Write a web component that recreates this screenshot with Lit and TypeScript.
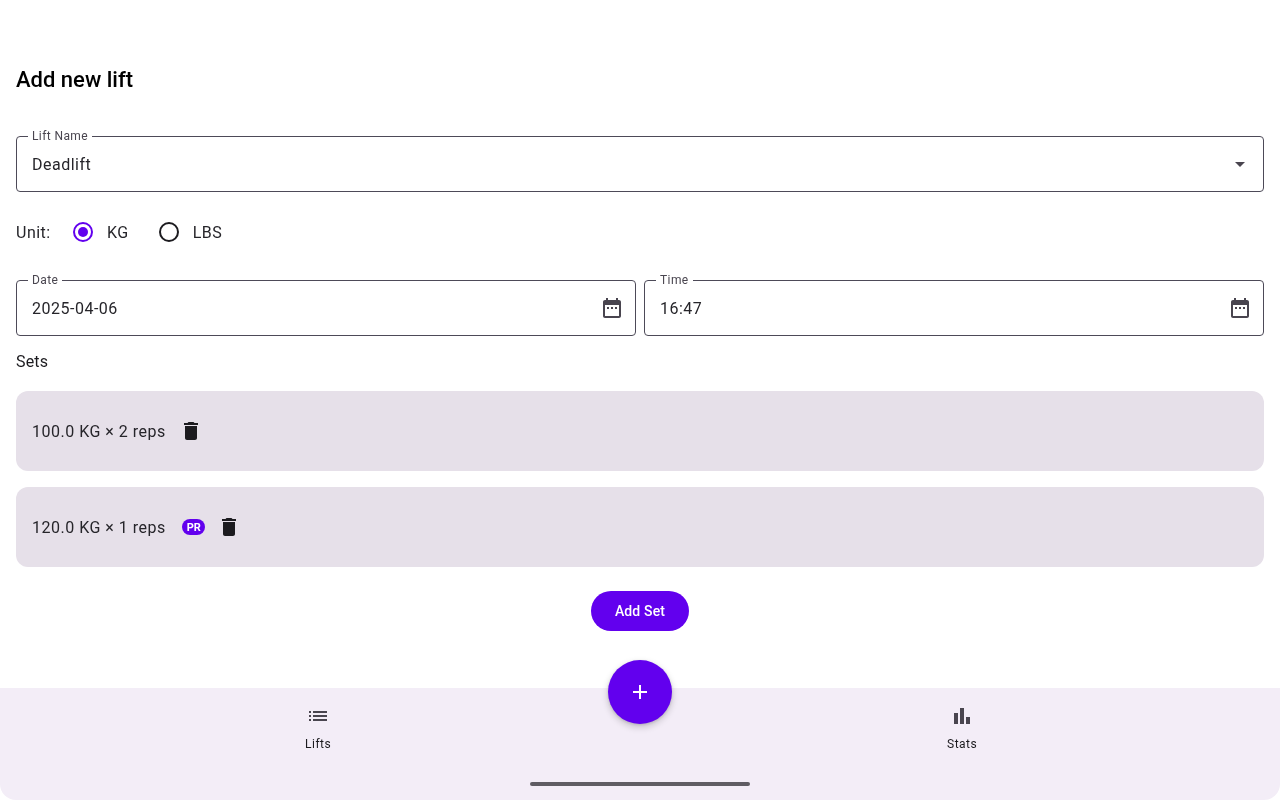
import { LitElement, html, css, svg } from 'lit';
import { customElement } from 'lit/decorators.js';

const icon = (d: unknown, size = 24) =>
  html`<svg width=${size} height=${size} viewBox="0 0 24 24" fill="currentColor">${d}</svg>`;

const trash = svg`<path d="M6 19c0 1.1.9 2 2 2h8c1.1 0 2-.9 2-2V7H6v12zM19 4h-3.5l-1-1h-5l-1 1H5v2h14V4z" />`;
const calendar = svg`<path d="M9 11H7v2h2v-2zm4 0h-2v2h2v-2zm4 0h-2v2h2v-2zm2-7h-1V2h-2v2H8V2H6v2H5c-1.11 0-1.99.9-1.99 2L3 20c0 1.1.89 2 2 2h14c1.1 0 2-.9 2-2V6c0-1.1-.9-2-2-2zm0 16H5V9h14v11z" />`;
const arrow = svg`<path d="M7 10l5 5 5-5z" />`;
const list = svg`<path d="M3 13h2v-2H3v2zm0 4h2v-2H3v2zm0-8h2V7H3v2zm4 4h14v-2H7v2zm0 4h14v-2H7v2zM7 7v2h14V7H7z" />`;
const bars = svg`<path d="M4 9h4v11H4zM16 13h4v7h-4zM10 4h4v16h-4z" />`;
const plus = svg`<path d="M19 13h-6v6h-2v-6H5v-2h6V5h2v6h6v2z" />`;

@customElement('app-root')
export class AppRoot extends LitElement {
  static styles = css`
    :host {
      display: flex;
      flex-direction: column;
      height: 800px;
      overflow: hidden;
      position: relative;
      font-family: Roboto, 'Liberation Sans', sans-serif;
      font-weight: 400;
      color: #26252a;
      background: #fff;
    }

    main {
      flex: 1;
      display: flex;
      flex-direction: column;
      padding: 64px 16px 0;
      will-change: transform;
    }

    h1 {
      margin: 0 0 40px;
      font-size: 22px;
      line-height: 32px;
      font-weight: 500;
      color: #000;
    }

    .field {
      position: relative;
      flex: 1;
      height: 56px;
      box-sizing: border-box;
      display: flex;
      align-items: center;
      justify-content: space-between;
      padding: 0 11px 0 15px;
      border: 1px solid #4d4a58;
      border-radius: 4px;
      font-size: 16px;
      letter-spacing: 0.5px;
    }

    .field label {
      position: absolute;
      top: -9px;
      left: 11px;
      padding: 0 4px;
      background: #fff;
      font-size: 12px;
      line-height: 16px;
      letter-spacing: 0.4px;
      color: #49454f;
    }

    .field svg {
      color: #49454f;
      display: block;
    }

    .unit {
      display: flex;
      align-items: center;
      height: 48px;
      margin: 16px 0 24px;
      font-size: 16px;
      letter-spacing: 0.5px;
    }

    .unit > span {
      margin-right: 8px;
    }

    .unit > span:first-child {
      min-width: 35px;
    }

    .radio {
      width: 48px;
      height: 48px;
      display: flex;
      align-items: center;
      justify-content: center;
    }

    .radio i {
      width: 20px;
      height: 20px;
      box-sizing: border-box;
      border: 2px solid #1c1b1f;
      border-radius: 50%;
      display: flex;
      align-items: center;
      justify-content: center;
    }

    .radio.on i {
      border-color: #6200ee;
    }

    .radio.on i::after {
      content: '';
      width: 10px;
      height: 10px;
      border-radius: 50%;
      background: #6200ee;
    }

    .unit .choice {
      margin-right: 16px;
    }

    .row {
      display: flex;
      gap: 8px;
    }

    .sets-label {
      margin: 16px 0 19px;
      font-size: 16px;
      line-height: 20px;
      letter-spacing: 0.15px;
      color: #1c1b1f;
    }

    .set {
      height: 80px;
      margin-bottom: 16px;
      display: flex;
      align-items: center;
      padding: 0 16px;
      border-radius: 12px;
      background: #e6e0e9;
      font-size: 16px;
      letter-spacing: 0.5px;
    }

    .set svg {
      display: block;
      margin-left: 13px;
      color: #1c1b1f;
    }

    .badge {
      margin-left: 16.5px;
      height: 16px;
      width: 23px;
      box-sizing: border-box;
      display: flex;
      align-items: center;
      justify-content: center;
      border-radius: 8px;
      background: #6200ee;
      color: #fff;
      font-size: 11px;
      font-weight: 700;
      letter-spacing: 0;
    }

    .badge + svg {
      margin-left: 12px;
    }

    .add {
      align-self: center;
      margin-top: 8px;
      height: 40px;
      padding: 0 24px;
      border: none;
      border-radius: 20px;
      background: #6200ee;
      color: #fff;
      font: 500 14px/20px Roboto, sans-serif;
      letter-spacing: 0.15px;
    }

    nav {
      height: 112px;
      display: flex;
      gap: 8px;
      background: #f3edf7;
      border-radius: 0 0 16px 16px;
      position: relative;
    }

    .tab {
      flex: 1;
      display: flex;
      flex-direction: column;
      align-items: center;
      padding-top: 16px;
      color: #49454f;
    }

    .tab svg {
      display: block;
    }

    .tab span {
      margin-top: 8px;
      font-size: 12px;
      line-height: 16px;
      font-weight: 400;
      letter-spacing: 0.5px;
      color: #1c1b1f;
      will-change: transform;
    }

    .fab {
      position: absolute;
      left: 608px;
      top: -28px;
      width: 64px;
      height: 64px;
      border-radius: 50%;
      background: #6200ee;
      color: #fff;
      display: flex;
      align-items: center;
      justify-content: center;
      box-shadow: 0 3px 6px 1px rgba(0, 0, 0, 0.15), 0 1px 3px rgba(0, 0, 0, 0.15);
    }

    .handle {
      position: absolute;
      left: 530px;
      bottom: 14px;
      width: 220px;
      height: 4px;
      border-radius: 2px;
      background: #5f5c63;
    }
  `;

  private field(label: string, value: string, trailing: unknown) {
    return html`
      <div class="field">
        <label>${label}</label>
        <span>${value}</span>
        ${icon(trailing)}
      </div>
    `;
  }

  render() {
    return html`
      <main>
        <h1>Add new lift</h1>
        <div class="row">${this.field('Lift Name', 'Deadlift', arrow)}</div>
        <div class="unit">
          <span>Unit:</span>
          <div class="radio on"><i></i></div>
          <span class="choice">KG</span>
          <div class="radio"><i></i></div>
          <span>LBS</span>
        </div>
        <div class="row">
          ${this.field('Date', '2025-04-06', calendar)}
          ${this.field('Time', '16:47', calendar)}
        </div>
        <div class="sets-label">Sets</div>
        <div class="set">
          <span>100.0 KG × 2 reps</span>
          ${icon(trash)}
        </div>
        <div class="set">
          <span>120.0 KG × 1 reps</span>
          <span class="badge">PR</span>
          ${icon(trash)}
        </div>
        <button class="add">Add Set</button>
      </main>
      <nav>
        <div class="tab">${icon(list)}<span>Lifts</span></div>
        <div class="tab">${icon(bars)}<span>Stats</span></div>
        <div class="fab">${icon(plus)}</div>
        <div class="handle"></div>
      </nav>
    `;
  }
}
